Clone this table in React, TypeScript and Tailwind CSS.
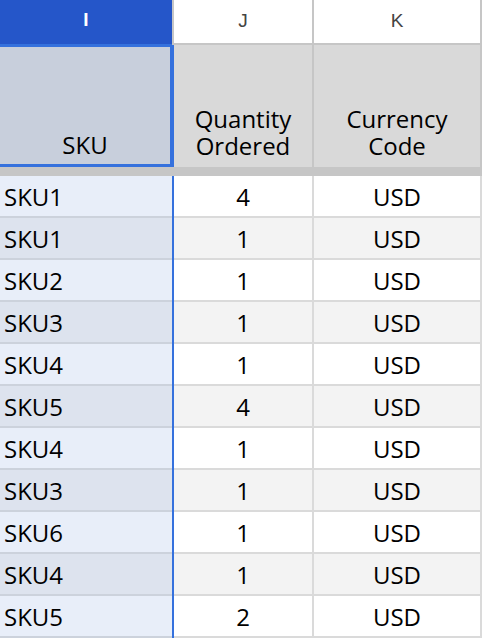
import React from "react";

const rows: [string, string][] = [
  ["SKU1", "4"],
  ["SKU1", "1"],
  ["SKU2", "1"],
  ["SKU3", "1"],
  ["SKU4", "1"],
  ["SKU5", "4"],
  ["SKU4", "1"],
  ["SKU3", "1"],
  ["SKU6", "1"],
  ["SKU4", "1"],
  ["SKU5", "2"],
];

export default function App() {
  return (
    <div className="w-[482px] h-[638px] overflow-hidden bg-white font-['Open_Sans',sans-serif] text-black">
      {/* column letters */}
      <div className="flex h-[45px] font-['Liberation_Sans',Arial,sans-serif] text-[19px]">
        <div className="w-[172px] h-[47px] bg-[#2556c9] border-b-[3px] border-[#3571dd] flex items-center justify-center pb-[3px] text-white font-semibold relative z-10">
          I
        </div>
        <div className="w-[2px] bg-[#c6c6c6]" />
        <div className="w-[138px] border-b-2 border-[#c6c6c6] flex items-center justify-center text-[#444]">J</div>
        <div className="w-[2px] bg-[#c6c6c6]" />
        <div className="w-[166px] border-b-2 border-[#c6c6c6] flex items-center justify-center text-[#444]">K</div>
        <div className="w-[2px] bg-[#c6c6c6]" />
      </div>
      {/* header row */}
      <div className="flex h-[122px] text-[24px] leading-[27px]">
        <div className="w-[174px] bg-[#c8cfdc] border-b-[3px] border-r-[4px] border-[#3571dd] flex items-end justify-center pb-[6px]">
          SKU
        </div>
        <div className="w-[138px] bg-[#d9d9d9] flex items-end justify-center text-center pb-[8px]">
          Quantity
          <br />
          Ordered
        </div>
        <div className="w-[2px] bg-[#c6c6c6]" />
        <div className="w-[166px] bg-[#d9d9d9] flex items-end justify-center text-center pb-[8px]">
          Currency
          <br />
          Code
        </div>
        <div className="w-[2px] bg-[#c6c6c6]" />
      </div>
      <div className="h-[9px] bg-[#c6c6c6]" />
      {rows.map(([sku, qty], i) => {
        const odd = i % 2 === 1;
        return (
          <div key={i} className="flex h-[42px] text-[24px]">
            <div
              className={`w-[172px] flex items-center pl-[4px] pt-[1px] border-b-2 border-[#ccd2dc] ${
                odd ? "bg-[#dde3ee]" : "bg-[#e8eef9]"
              }`}
            >
              {sku}
            </div>
            <div className="w-[2px] bg-[#3571dd]" />
            <div
              className={`w-[138px] flex items-center justify-center pt-[1px] border-b-2 border-[#dadada] ${
                odd ? "bg-[#f3f3f3]" : "bg-white"
              }`}
            >
              {qty}
            </div>
            <div className="w-[2px] bg-[#dadada]" />
            <div
              className={`w-[166px] flex items-center justify-center pt-[1px] border-b-2 border-[#dadada] ${
                odd ? "bg-[#f3f3f3]" : "bg-white"
              }`}
            >
              USD
            </div>
            <div className="w-[2px] bg-[#dadada]" />
          </div>
        );
      })}
    </div>
  );
}
